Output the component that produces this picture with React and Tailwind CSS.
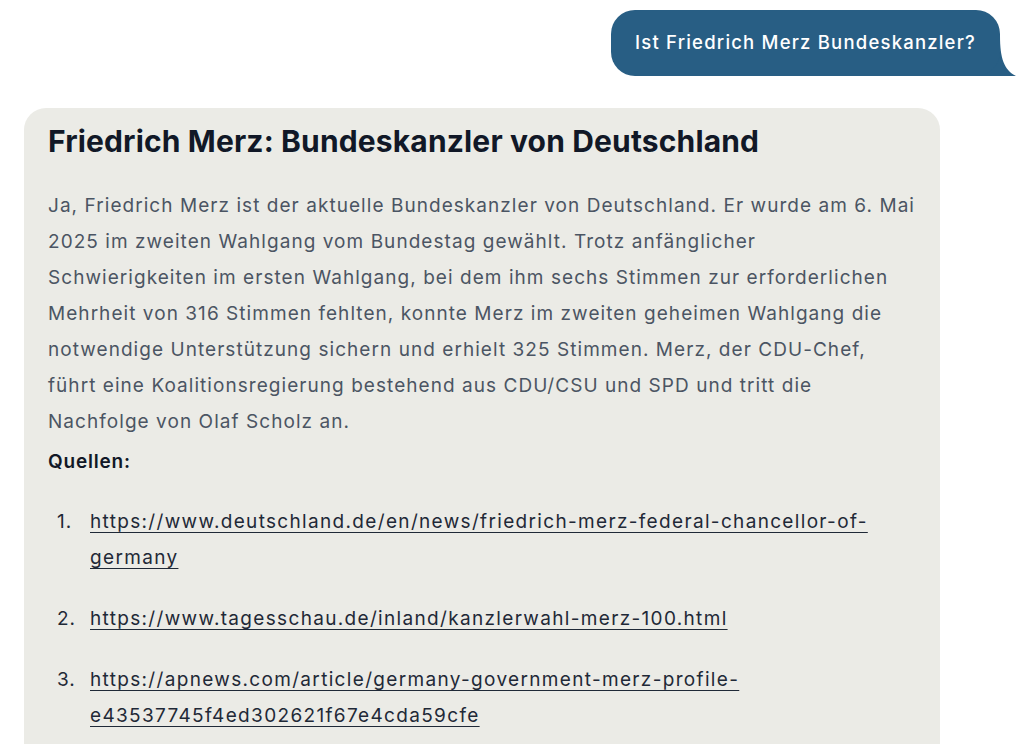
export default function App() {
  const sources = [
    "https://www.deutschland.de/en/news/friedrich-merz-federal-chancellor-of-germany",
    "https://www.tagesschau.de/inland/kanzlerwahl-merz-100.html",
    "https://apnews.com/article/germany-government-merz-profile-e43537745f4ed302621f67e4cda59cfe",
  ];

  const answer = [
    "Ja, Friedrich Merz ist der aktuelle Bundeskanzler von Deutschland. Er wurde am 6. Mai",
    "2025 im zweiten Wahlgang vom Bundestag gewählt. Trotz anfänglicher",
    "Schwierigkeiten im ersten Wahlgang, bei dem ihm sechs Stimmen zur erforderlichen",
    "Mehrheit von 316 Stimmen fehlten, konnte Merz im zweiten geheimen Wahlgang die",
    "notwendige Unterstützung sichern und erhielt 325 Stimmen. Merz, der CDU-Chef,",
    "führt eine Koalitionsregierung bestehend aus CDU/CSU und SPD und tritt die",
    "Nachfolge von Olaf Scholz an.",
  ];

  return (
    <div className="h-[744px] w-[1030px] overflow-hidden bg-white font-['Inter',sans-serif]">
      {/* user message */}
      <div className="flex justify-end pr-[30px] pt-[10px]">
        <div className="relative">
          <div className="relative z-10 flex h-[66px] items-center rounded-[24px] bg-[#285e84] px-6 text-[18.5px] font-medium tracking-[1.2px] text-white">
            Ist Friedrich Merz Bundeskanzler?
          </div>
          <svg
            className="absolute bottom-0 right-[-16px]"
            width="40"
            height="40"
            viewBox="0 0 40 40"
          >
            <path d="M0 0 H24 C24 22 28 34 40 40 H0 Z" fill="#285e84" />
          </svg>
        </div>
      </div>

      {/* assistant answer */}
      <div className="ml-6 mt-8 w-[916px] rounded-[22px] bg-[#ebebe6] px-6 pb-10 pt-[14px]">
        <h1 className="text-[30px] font-bold leading-[38px] tracking-[0.15px] text-[#111827]">
          Friedrich Merz: Bundeskanzler von Deutschland
        </h1>
        <p className="mt-[28px] whitespace-nowrap text-[19px] leading-[36px] tracking-[1.05px] text-[#4b5563]">
          {answer.map((line, i) => (
            <span key={i} className="block">
              {line}
            </span>
          ))}
        </p>
        <p className="mt-1 text-[19px] font-semibold leading-[36px] tracking-[0.8px] text-[#111827]">
          Quellen:
        </p>
        <ol className="mt-[24px] space-y-[25px] text-[19px] leading-[36px] tracking-[1.33px] text-[#1f2937]">
          {sources.map((url, i) => (
            <li key={url} className="flex">
              <span className="w-[42px] shrink-0 pl-[9px] tracking-[1px]">{i + 1}.</span>
              <a href={url} className="min-w-0 break-words underline underline-offset-4">
                {url}
              </a>
            </li>
          ))}
        </ol>
      </div>
    </div>
  );
}
